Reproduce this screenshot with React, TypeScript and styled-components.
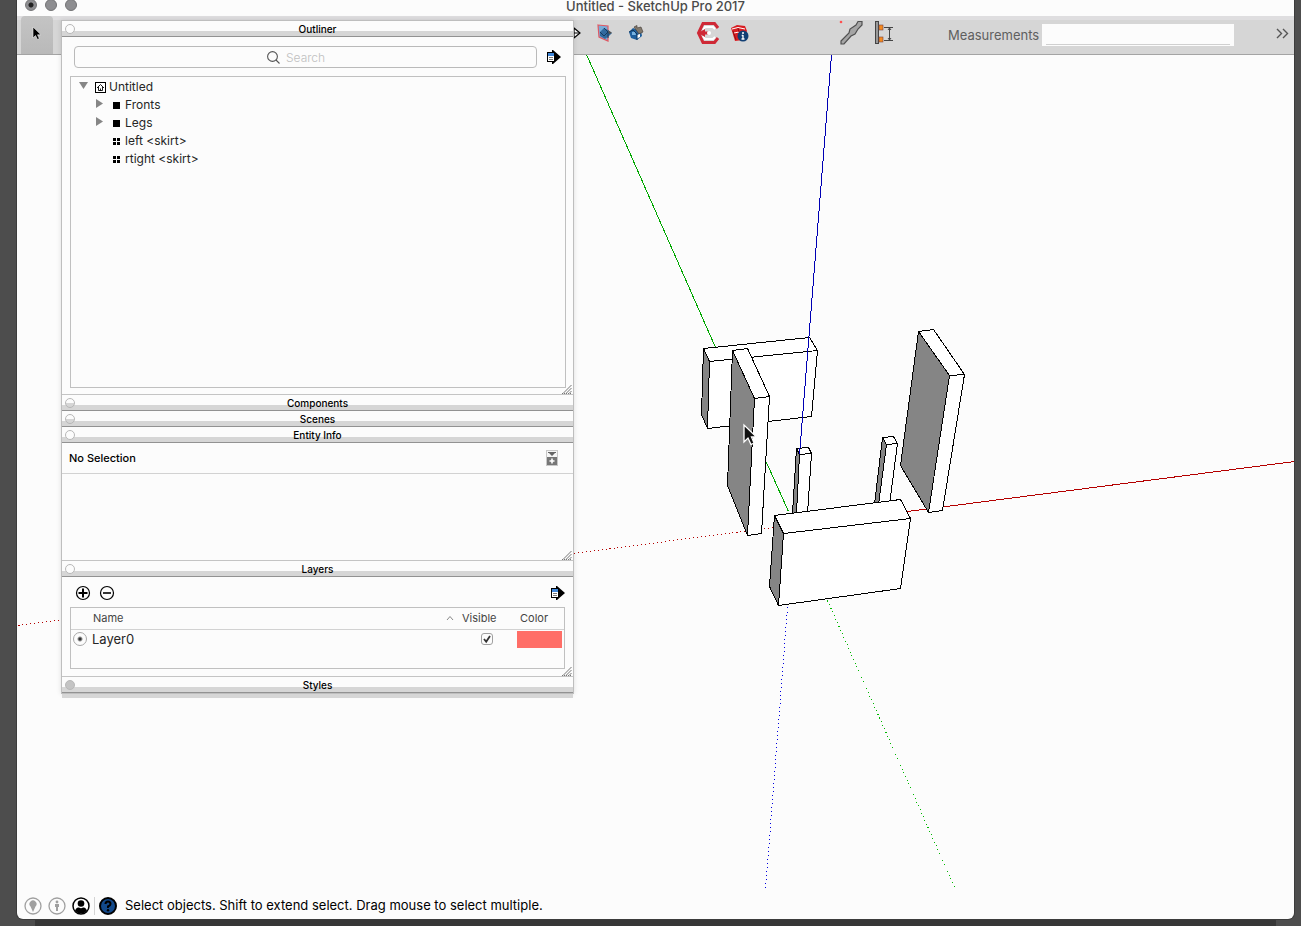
import React from "react";
import styled, { createGlobalStyle } from "styled-components";

const GlobalStyle = createGlobalStyle`
  *, *::before, *::after { box-sizing: border-box; }
  body {
    margin: 0;
    background: #4d4d4d;
    font-family: Inter, "Liberation Sans", sans-serif;
    font-size: 12px;
    color: #000;
  }
  button, input { font: inherit; color: inherit; }
`;

const Desktop = styled.div`
  min-height: 100vh;
  display: flex;
  flex-direction: column;
  padding: 0 7px 0 17px;
  overflow: hidden;
`;

const AppWindow = styled.div`
  flex: 1;
  position: relative;
  display: flex;
  flex-direction: column;
  background: #fcfcfc;
  border-radius: 0 0 6px 6px;
  box-shadow: 0 0 0 1px #3c3c3c;
`;

const WindowShade = styled.div`
  height: 7px;
  margin: 0 18px;
  background: #373737;
`;

const TitleBar = styled.header`
  display: grid;
  grid-template-columns: 1fr auto 1fr;
  height: 16px;
`;

const Lights = styled.div`
  display: flex;
  gap: 8px;
  margin: -1px 0 0 8px;
`;

const Light = styled.button<{ $dot?: boolean }>`
  width: 12px;
  height: 12px;
  padding: 0;
  border: 1px solid #737375;
  border-radius: 50%;
  background: ${(p) => (p.$dot ? "radial-gradient(circle, #222 0 2px, #8e8e91 3px)" : "#8e8e91")};
`;

const Title = styled.h1`
  margin: 0;
  font-size: 13px;
  line-height: 12px;
  font-weight: 500;
  color: #4a4a4a;
`;

const Toolbar = styled.div`
  display: flex;
  align-items: flex-start;
  height: 39px;
  padding-left: 4px;
  border-top: 4px solid #dfdee0;
  border-bottom: 1px solid #a4a4a4;
  background: #d6d6d6;
`;

const ToolGroup = styled.div<{ $before?: number }>`
  display: flex;
  flex: none;
  margin-left: ${(p) => p.$before ?? 0}px;
`;

const Tool = styled.button<{ $active?: boolean }>`
  display: flex;
  justify-content: center;
  align-items: center;
  width: 32px;
  height: 38px;
  margin-top: -4px;
  padding: 0 0 4px;
  border: 0;
  border-radius: 4px 4px 0 0;
  background: ${(p) => (p.$active ? "linear-gradient(#c4c4c4, #b9b9b9)" : "none")};
`;

const Measure = styled.label`
  display: flex;
  align-items: center;
  gap: 3px;
  margin: 4px 0 0 48px;
  font-size: 13px;
  color: #5f5f5f;
`;

const MeasureBox = styled.span`
  display: flex;
  width: 192px;
  height: 22px;
  padding: 0 4px 1px;
  background: #fcfcfc;
`;

const MeasureInput = styled.input`
  width: 100%;
  padding: 0;
  border: 0;
  border-bottom: 1px solid #d0d0d0;
  outline: 0;
  background: transparent;
`;

const Overflow = styled.button`
  display: flex;
  margin: 8px 5px 0 auto;
  padding: 0;
  border: 0;
  background: none;
`;

const Viewport = styled.main`
  flex: 1;
  display: flex;
  min-height: 600px;
  overflow: hidden;
`;

const Scene = styled.svg`
  flex: 1;
  display: block;
`;

const StatusBar = styled.footer`
  display: flex;
  align-items: center;
  gap: 6px;
  height: 26px;
  padding-left: 7px;
`;

const StatusButton = styled.button`
  display: flex;
  padding: 0;
  border: 0;
  background: none;
`;

const StatusRule = styled.span`
  width: 1px;
  height: 18px;
  margin: 0 -2px;
  background: #d4d4d4;
`;

const StatusText = styled.p`
  margin: 0 0 0 2px;
  padding-bottom: 2px;
  font-size: 13px;
`;

const Palette = styled.aside`
  position: absolute;
  left: 44px;
  top: 20px;
  width: 513px;
  border: 1px solid #bebebe;
  background: #fcfcfc;
  box-shadow: 0 5px 0 -1px #d6d6d6, 0 0 5px rgba(0, 0, 0, 0.12);
`;

const PanelHead = styled.div`
  position: relative;
  display: flex;
  justify-content: center;
  height: 16px;
  border-bottom: 1px solid #929292;
  background: linear-gradient(#fcfcfc 0 10px, #d6d6d6 10px);
`;

const PanelTitle = styled.h2`
  margin: 0;
  font-size: 10px;
  line-height: 16px;
  font-weight: 500;
`;

const PanelToggle = styled.button<{ $face: "open" | "closed" | "idle" }>`
  position: absolute;
  left: 3px;
  top: 3px;
  width: 10px;
  height: 10px;
  padding: 0;
  border: 1px solid #b8b8b8;
  border-radius: 50%;
  background: ${(p) =>
    p.$face === "open" ? "#fcfcfc" : p.$face === "closed" ? "linear-gradient(#fcfcfc 50%, #d6d6d6 50%)" : "#c4c4c4"};
`;

const PanelBody = styled.section<{ $h: number }>`
  position: relative;
  display: flex;
  flex-direction: column;
  min-height: ${(p) => p.$h}px;
  border-bottom: 1px solid #c4c4c4;
`;

const Grip = styled.svg`
  position: absolute;
  right: 1px;
  bottom: 0;
`;

const SearchRow = styled.div`
  display: flex;
  align-items: center;
  gap: 10px;
  padding: 9px 12px 8px;
`;

const SearchBox = styled.label`
  flex: 1;
  display: flex;
  justify-content: center;
  align-items: center;
  gap: 6px;
  height: 22px;
  border: 1px solid #bababa;
  border-radius: 4px;
`;

const SearchInput = styled.input`
  width: 58px;
  padding: 0;
  border: 0;
  outline: 0;
  background: transparent;
  font-weight: 300;
  &::placeholder { color: #c0c0c0; opacity: 1; }
`;

const IconButton = styled.button`
  display: flex;
  padding: 0;
  border: 0;
  background: none;
`;

const Tree = styled.ul`
  flex: 1;
  margin: 0 7px 6px 8px;
  padding: 1px 0;
  border: 1px solid #c0c0c0;
  list-style: none;
`;

const TreeRow = styled.li<{ $level: number }>`
  display: flex;
  align-items: center;
  height: 18px;
  padding-left: ${(p) => 8 + p.$level * 16}px;
  color: #262626;
`;

const TreeLabel = styled.span`
  padding-bottom: 2px;
`;

const Disclosure = styled.span`
  display: flex;
  width: 16px;
  height: 12px;
`;

const TreeIcon = styled.span<{ $wide?: boolean }>`
  display: flex;
  justify-content: flex-end;
  width: ${(p) => (p.$wide ? 11 : 9)}px;
  margin-right: ${(p) => (p.$wide ? 3 : 5)}px;
`;

const EntityRow = styled.div`
  display: flex;
  justify-content: space-between;
  align-items: center;
  height: 31px;
  padding: 0 15px 0 7px;
  border-bottom: 1px solid #d2d2d2;
`;

const EntityText = styled.p`
  margin: 0;
  padding-bottom: 1px;
  font-size: 11px;
  font-weight: 500;
`;

const LayerTools = styled.div`
  display: flex;
  align-items: center;
  gap: 8px;
  height: 30px;
  padding: 2px 8px 0 13px;
`;

const PushRight = styled.span`
  display: flex;
  margin-left: auto;
`;

const LayerFrame = styled.div`
  height: 62px;
  margin: 0 8px;
  border: 1px solid #c0c0c0;
`;

const LayerTable = styled.table`
  width: 100%;
  table-layout: fixed;
  border-collapse: collapse;
`;

const Th = styled.th<{ $w?: number; $pad?: number }>`
  width: ${(p) => (p.$w ? `${p.$w}px` : "auto")};
  height: 21px;
  padding: 0 0 0 ${(p) => p.$pad ?? 0}px;
  border-bottom: 1px solid #d2d2d2;
  text-align: left;
  font-size: 11px;
  font-weight: 400;
  color: #444;
`;

const NameHead = styled.span`
  display: flex;
  justify-content: space-between;
  align-items: center;
`;

const Td = styled.td`
  height: 20px;
  padding: 0;
`;

const NameCell = styled.label`
  display: flex;
  align-items: center;
  gap: 5px;
  padding-left: 2px;
  font-size: 13px;
  color: #262626;
`;

const Radio = styled.input`
  appearance: none;
  width: 14px;
  height: 14px;
  margin: 0;
  border: 1px solid #a8a8a8;
  border-radius: 50%;
  background: radial-gradient(circle, #333 0 1px, #fcfcfc 3px);
`;

const CheckWrap = styled.label`
  position: relative;
  display: flex;
  width: 12px;
  margin-left: 27px;
`;

const Check = styled.input`
  appearance: none;
  width: 12px;
  height: 12px;
  margin: 0;
  border: 1px solid #a0a0a0;
  border-radius: 3px;
`;

const Tick = styled.svg`
  position: absolute;
  left: 0;
  top: 0;
  pointer-events: none;
`;

const Swatch = styled.button`
  display: block;
  width: 45px;
  height: 17px;
  padding: 0;
  border: 0;
  background: #ff6e67;
`;

type Face = "open" | "closed" | "idle";

function PanelHeader({ title, face }: { title: string; face: Face }) {
  return (
    <PanelHead>
      <PanelToggle $face={face} aria-label={`Toggle ${title}`} />
      <PanelTitle>{title}</PanelTitle>
    </PanelHead>
  );
}

function ResizeGrip() {
  return (
    <Grip width="10" height="10" viewBox="0 0 10 10" stroke="#777" strokeWidth="1">
      <path d="M1 9.500L9.500 1M4 9.500L9.500 4M7 9.500L9.500 7" fill="none" />
      <path d="M0 9.500H9" strokeDasharray="1 1" />
    </Grip>
  );
}

function DetailsIcon() {
  return (
    <svg width="14" height="14" viewBox="0 0 14 14">
      <path d="M5 0V2H0V12H5V14H6L14 7L6 0Z" fill="#000" />
      <rect x="1" y="3" width="6" height="8" fill="#fff" />
      <rect x="1" y="3" width="6" height="3" fill="#3f86d8" />
      <path d="M2 7.500H6M2 9.500H6" stroke="#777" />
    </svg>
  );
}

function Arrow({ size = 14 }: { size?: number }) {
  return (
    <svg width={size} height={size} viewBox="0 0 14 14">
      <path d="M3 1V12L5.500 9.500L7.500 13.500L9.300 12.600L7.500 8.800H11Z" fill="#000" stroke="#eee" strokeWidth=".6" />
    </svg>
  );
}

function Triangle({ open }: { open?: boolean }) {
  return (
    <svg width="10" height="10" viewBox="0 0 10 10" fill="#868686">
      <path d={open ? "M0 1H9L4.500 8Z" : "M1 0L8 4.500L1 9Z"} />
    </svg>
  );
}

function HomeIcon() {
  return (
    <svg width="11" height="11" viewBox="0 0 11 11" fill="none" stroke="#000">
      <rect x=".5" y=".5" width="10" height="10" fill="#fff" />
      <path d="M2 6L5.500 2.500L9 6M3.500 5V8.500H7.500V5M5.500 6.500V8.500" strokeWidth=".9" />
    </svg>
  );
}

function GroupIcon() {
  return (
    <svg width="8" height="8" viewBox="0 0 8 8">
      <rect x="1" y="1" width="7" height="7" fill="#000" />
    </svg>
  );
}

function ComponentIcon() {
  return (
    <svg width="8" height="8" viewBox="0 0 8 8" fill="#000">
      <path d="M1 1H4V4H1ZM5 1H8V4H5ZM1 5H4V8H1ZM5 5H8V8H5Z" />
    </svg>
  );
}

const nodes = [
  { name: "Untitled", level: 0, open: true, icon: "home" },
  { name: "Fronts", level: 1, open: false, icon: "group" },
  { name: "Legs", level: 1, open: false, icon: "group" },
  { name: "left <skirt>", level: 1, icon: "component" },
  { name: "rtight <skirt>", level: 1, icon: "component" },
];

function Outliner() {
  return (
    <PanelBody $h={358}>
      <SearchRow>
        <SearchBox>
          <svg width="13" height="13" viewBox="0 0 13 13" fill="none" stroke="#555" strokeWidth="1.100">
            <circle cx="5.500" cy="5.500" r="4.900" />
            <path d="M9 9L12.500 12.500" />
          </svg>
          <SearchInput placeholder="Search" aria-label="Search" />
        </SearchBox>
        <IconButton aria-label="Details">
          <DetailsIcon />
        </IconButton>
      </SearchRow>
      <Tree>
        {nodes.map((n) => (
          <TreeRow key={n.name} $level={n.level}>
            <Disclosure>{n.open !== undefined && <Triangle open={n.open} />}</Disclosure>
            <TreeIcon $wide={n.icon === "home"}>
              {n.icon === "home" ? <HomeIcon /> : n.icon === "group" ? <GroupIcon /> : <ComponentIcon />}
            </TreeIcon>
            <TreeLabel>{n.name}</TreeLabel>
          </TreeRow>
        ))}
      </Tree>
      <ResizeGrip />
    </PanelBody>
  );
}

function EntityInfo() {
  return (
    <PanelBody $h={118}>
      <EntityRow>
        <EntityText>No Selection</EntityText>
        <IconButton aria-label="Show details">
          <svg width="12" height="16" viewBox="0 0 12 16">
            <rect x=".5" y=".5" width="11" height="15" fill="#f6f6f6" stroke="#c8c8c8" />
            <path d="M2 2H10V3H9L6 6L3 3H2Z" fill="#666" />
            <rect x="1" y="7" width="10" height="8" fill="#777" />
            <path d="M3.500 11H8.500M6 8.500V13.500" stroke="#fff" strokeWidth="1.600" />
          </svg>
        </IconButton>
      </EntityRow>
      <ResizeGrip />
    </PanelBody>
  );
}

function Layers() {
  return (
    <PanelBody $h={100}>
      <LayerTools>
        <IconButton aria-label="Add layer">
          <svg width="16" height="16" viewBox="0 0 16 16" fill="none" stroke="#000">
            <circle cx="8" cy="8" r="6.500" strokeWidth="1.200" />
            <path d="M3.500 8H12.500M8 3.500V12.500" strokeWidth="2" />
          </svg>
        </IconButton>
        <IconButton aria-label="Remove layer">
          <svg width="16" height="16" viewBox="0 0 16 16" fill="none" stroke="#000">
            <circle cx="8" cy="8" r="6.500" strokeWidth="1.200" />
            <path d="M4 8H12" strokeWidth="1.600" />
          </svg>
        </IconButton>
        <PushRight>
          <IconButton aria-label="Layer details">
            <DetailsIcon />
          </IconButton>
        </PushRight>
      </LayerTools>
      <LayerFrame>
        <LayerTable>
          <thead>
            <tr>
              <Th $pad={22}>
                <NameHead>
                  Name
                  <svg width="8" height="6" viewBox="0 0 8 6" fill="none" stroke="#888">
                    <path d="M1 5L4 1.500L7 5" />
                  </svg>
                </NameHead>
              </Th>
              <Th $w={63} $pad={8}>Visible</Th>
              <Th $w={47} $pad={3}>Color</Th>
            </tr>
          </thead>
          <tbody>
            <tr>
              <Td>
                <NameCell>
                  <Radio type="radio" name="layer" defaultChecked />
                  Layer0
                </NameCell>
              </Td>
              <Td>
                <CheckWrap>
                  <Check type="checkbox" defaultChecked aria-label="Layer0 visible" />
                  <Tick width="12" height="12" viewBox="0 0 12 12" fill="none" stroke="#333" strokeWidth="1.800">
                    <path d="M3 6L5.200 8.700L9 3" />
                  </Tick>
                </CheckWrap>
              </Td>
              <Td>
                <Swatch aria-label="Layer0 color" />
              </Td>
            </tr>
          </tbody>
        </LayerTable>
      </LayerFrame>
      <ResizeGrip />
    </PanelBody>
  );
}

function Model() {
  return (
    <Scene aria-label="3D model" shapeRendering="crispEdges">
      <g transform="translate(-16.5 -54.5)" stroke="#000" strokeLinejoin="round" fill="#fff">
        <g fill="none">
          <path d="M18 625L773 527" stroke="#b40000" strokeDasharray="1 3" />
          <path d="M907 511L1294 461" stroke="#b40000" />
          <path d="M586 54L715 347M766 462L788 511" stroke="#00a800" />
          <path d="M827 600L955 889" stroke="#00b800" strokeDasharray="1 3" />
          <path d="M787 607L765 889" stroke="#0000e0" strokeDasharray="1 3" />
        </g>
        <path d="M703 348L809 337L817 350L811 416L707 428L709 361Z" />
        <path d="M703 348L709 361L707 428L701 414Z" fill="#858585" />
        <path d="M709 361L817 350" />
        <path d="M796 448L808 447L811 453L807 513L792 513Z" />
        <path d="M796 448L799 454L796 513H792Z" fill="#858585" />
        <path d="M799 454L811 453" />
        <path d="M831 54L799 454" stroke="#0000b4" fill="none" />
        <path d="M732 350L747 348L769 396L761 533L747 535L727 485Z" />
        <path d="M732 350L754 398L747 535L727 485Z" fill="#858585" />
        <path d="M754 398L769 396" />
        <path d="M882 437L893 436L897 443L889 504H874Z" />
        <path d="M882 437L886 444L878 504H874Z" fill="#858585" />
        <path d="M886 444L897 443" />
        <path d="M918 331L933 329L964 374L942 510L928 512L900 465Z" />
        <path d="M918 331L949 375L928 512L900 465Z" fill="#858585" />
        <path d="M949 375L964 374" />
        <path d="M774 515L900 499L910 518L900 588L778 605L783 533Z" />
        <path d="M774 515L783 533L778 605L769 586Z" fill="#858585" />
        <path d="M783 533L910 518" />
      </g>
      <path
        transform="translate(727 370)"
        d="M0 0V17L4 13L7 19.500L10 18L7.500 12H12.500Z"
        fill="#111"
        stroke="#fff"
        strokeWidth="1.300"
        shapeRendering="auto"
      />
    </Scene>
  );
}

function Toolstrip() {
  return (
    <Toolbar>
      <ToolGroup>
        <Tool $active aria-label="Select">
          <Arrow size={14} />
        </Tool>
      </ToolGroup>
      <ToolGroup $before={504}>
        <Tool aria-label="Move">
          <svg width="16" height="16" viewBox="0 0 16 16" fill="#fff" stroke="#000" strokeWidth="1.200">
            <path d="M9 3L15 8L9 13ZM7 3L1 8L7 13Z" />
            <path d="M1 8H15M8 1V15" fill="none" />
          </svg>
        </Tool>
        <Tool aria-label="3D Warehouse">
          <svg width="18" height="18" viewBox="0 0 18 18">
            <path d="M2 1L12 2V17L3 13Z" fill="#78acd9" stroke="#df5964" strokeWidth="1.200" />
            <path d="M4 8L8 4L12 6L16 9L13 12L9 15L4 12Z" fill="#316a9f" />
            <path d="M8 4L12 8L8 12L4 8M12 8V14" fill="none" stroke="#173a5e" />
            <path d="M12 6L16 9L13 10Z" fill="#5b5049" />
          </svg>
        </Tool>
        <Tool aria-label="Share model">
          <svg width="18" height="18" viewBox="0 0 18 18">
            <path d="M1 8L5 4L13 7L14 12L9 16L3 14Z" fill="#1e5f9d" />
            <path d="M6 3L9 1.500V4L13 3L15 8L11 10Z" fill="#82796c" stroke="#4a443d" strokeWidth=".7" />
            <path d="M4 8L7 7.500L8 11L4 11Z" fill="#79b3e0" />
            <path d="M9 11L12 10V13L9 14.500Z" fill="#fff" />
            <path d="M1 8L5 6L9 10V16" fill="none" stroke="#0f355a" />
          </svg>
        </Tool>
      </ToolGroup>
      <ToolGroup $before={39}>
        <Tool aria-label="CutList">
          <svg width="24" height="24" viewBox="0 0 24 24">
            <path d="M22 7L18.500 2.500H7L2.500 12L7 21.500H18.500L22 17" fill="none" stroke="#cf2936" strokeWidth="3" />
            <path d="M19 8L17 6H9L7 9M7 15L9 18H17L19 16" fill="none" stroke="#fff" strokeWidth="2" />
            <path d="M2 12L9 8V10.500H13V13.500H9V16Z" fill="#cf2936" />
            <circle cx="13" cy="12" r="2" fill="#fff" />
          </svg>
        </Tool>
        <Tool aria-label="Model info">
          <svg width="20" height="20" viewBox="0 0 20 20">
            <path d="M1 5L7 2L15 3L17 8L13 17L5 18Z" fill="#d91d22" />
            <path d="M2 6L8 4.500L15 6M4 10L9 9" fill="none" stroke="#fff" strokeWidth="1" />
            <path d="M8 5L9 9M3 8L6 17" stroke="#8e0f14" />
            <circle cx="13" cy="13" r="5.500" fill="#113f74" />
            <path d="M13 12V16M11.700 12.500H13M11.500 16H14.500" stroke="#fff" strokeWidth="1.300" />
            <circle cx="13" cy="10" r="1" fill="#fff" />
          </svg>
        </Tool>
      </ToolGroup>
      <ToolGroup $before={80}>
        <Tool aria-label="Profile builder">
          <svg width="26" height="26" viewBox="0 0 26 26">
            <circle cx="2" cy="2" r="1.300" fill="#ff5050" />
            <path d="M2 21L10 13L11 9L17 5L19 1.500H23V5L19 9L16 14L12 16L5 24H2Z" fill="#a5a5a5" stroke="#505050" strokeWidth="1.200" />
          </svg>
        </Tool>
        <Tool aria-label="Dimensions">
          <svg width="18" height="24" viewBox="0 0 18 24">
            <rect x=".5" y=".5" width="3" height="22" fill="#999" stroke="#444" />
            <rect x="4" y="4" width="4" height="5" fill="#f58a1f" stroke="#744" strokeWidth=".6" />
            <rect x="4" y="16" width="4" height="5" fill="#f58a1f" stroke="#744" strokeWidth=".6" />
            <path d="M9 6.500H18M9 19.500H18M14.500 6.500V19.500M13 9L14.500 7L16 9M13 17L14.500 19L16 17" fill="none" stroke="#444" />
          </svg>
        </Tool>
      </ToolGroup>
      <Measure>
        Measurements
        <MeasureBox>
          <MeasureInput aria-label="Measurements" />
        </MeasureBox>
      </Measure>
      <Overflow aria-label="More tools">
        <svg width="13" height="11" viewBox="0 0 13 11" fill="none" stroke="#555" strokeWidth="1.400">
          <path d="M1 1L5.500 5.500L1 10M7 1L11.500 5.500L7 10" />
        </svg>
      </Overflow>
    </Toolbar>
  );
}

function Status() {
  return (
    <StatusBar>
      <StatusButton aria-label="Geo-location">
        <svg width="18" height="18" viewBox="0 0 18 18">
          <circle cx="9" cy="9" r="8" fill="none" stroke="#a0a0a0" strokeWidth="1.300" />
          <path d="M9 15L6.500 9.500A3.500 3.500 0 1 1 11.500 9.500Z" fill="#a0a0a0" />
        </svg>
      </StatusButton>
      <StatusButton aria-label="Credits">
        <svg width="18" height="18" viewBox="0 0 18 18">
          <circle cx="9" cy="9" r="8" fill="none" stroke="#a0a0a0" strokeWidth="1.300" />
          <circle cx="9" cy="5" r="1.400" fill="#a0a0a0" />
          <path d="M7 7H11V10H10V14H8V10H7Z" fill="#a0a0a0" />
        </svg>
      </StatusButton>
      <StatusButton aria-label="Sign in">
        <svg width="18" height="18" viewBox="0 0 18 18">
          <circle cx="9" cy="9" r="8" fill="#fff" stroke="#000" strokeWidth="1.500" />
          <circle cx="9" cy="6.500" r="3.300" fill="#000" />
          <path d="M3 14Q4 10 7 10.500Q9 12 11 10.500Q14 10 15 14Q9 19 3 14Z" fill="#000" />
        </svg>
      </StatusButton>
      <StatusRule />
      <StatusButton aria-label="Help">
        <svg width="18" height="18" viewBox="0 0 18 18">
          <circle cx="9" cy="9" r="8" fill="#12498b" stroke="#000" strokeWidth="2" />
          <path d="M6.500 7Q6.500 4.500 9 4.500Q11.500 4.500 11.500 7Q11.500 8.500 9 9.500V11" fill="none" stroke="#000" strokeWidth="2" />
          <circle cx="9" cy="13.300" r="1.200" fill="#000" />
        </svg>
      </StatusButton>
      <StatusText>Select objects. Shift to extend select. Drag mouse to select multiple.</StatusText>
    </StatusBar>
  );
}

export default function App() {
  return (
    <Desktop>
      <GlobalStyle />
      <AppWindow>
        <TitleBar>
          <Lights>
            <Light $dot aria-label="Close" />
            <Light aria-label="Minimize" />
            <Light aria-label="Zoom" />
          </Lights>
          <Title>Untitled - SketchUp Pro 2017</Title>
        </TitleBar>
        <Toolstrip />
        <Viewport>
          <Model />
        </Viewport>
        <Status />
        <Palette>
          <PanelHeader title="Outliner" face="open" />
          <Outliner />
          <PanelHeader title="Components" face="closed" />
          <PanelHeader title="Scenes" face="closed" />
          <PanelHeader title="Entity Info" face="open" />
          <EntityInfo />
          <PanelHeader title="Layers" face="open" />
          <Layers />
          <PanelHeader title="Styles" face="idle" />
        </Palette>
      </AppWindow>
      <WindowShade />
    </Desktop>
  );
}
